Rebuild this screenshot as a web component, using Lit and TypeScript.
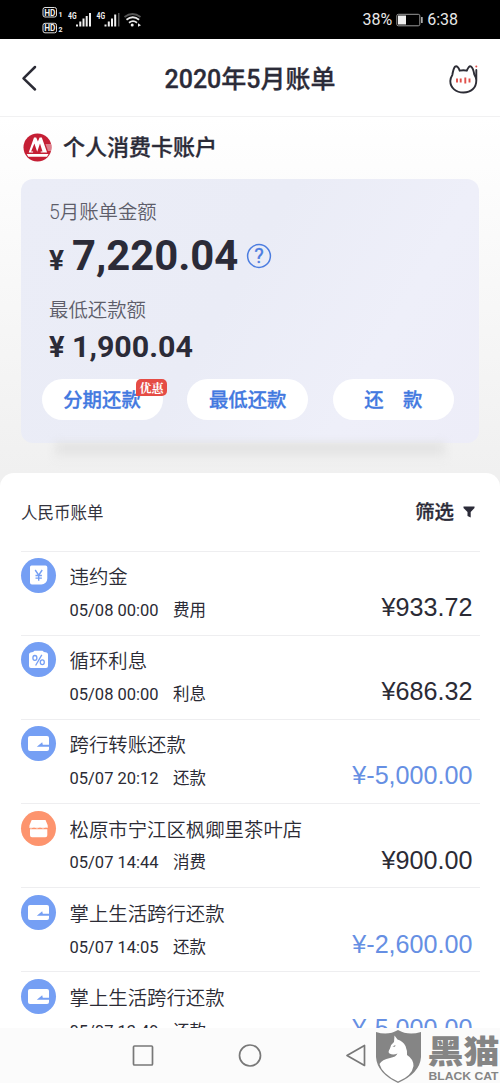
import { LitElement, html, css, svg } from "lit";
import { customElement, property } from "lit/decorators.js";
import { classMap } from "lit/directives/class-map.js";

type Kind = "fee" | "interest" | "card" | "shop";

interface Entry {
  kind: Kind;
  title: string;
  time: string;
  type: string;
  amount: string;
  credit?: boolean;
}

const ENTRIES: Entry[] = [
  { kind: "fee", title: "违约金", time: "05/08 00:00", type: "费用", amount: "¥933.72" },
  { kind: "interest", title: "循环利息", time: "05/08 00:00", type: "利息", amount: "¥686.32" },
  { kind: "card", title: "跨行转账还款", time: "05/07 20:12", type: "还款", amount: "¥-5,000.00", credit: true },
  { kind: "shop", title: "松原市宁江区枫卿里茶叶店", time: "05/07 14:44", type: "消费", amount: "¥900.00" },
  { kind: "card", title: "掌上生活跨行还款", time: "05/07 14:05", type: "还款", amount: "¥-2,600.00", credit: true },
  { kind: "card", title: "掌上生活跨行还款", time: "05/07 13:49", type: "还款", amount: "¥-5,000.00", credit: true },
];

const GLYPHS = {
  fee: svg`
    <path d="M10.500 7.500h14a1.800 1.800 0 0 1 1.800 1.800v11.200a6 6 0 0 1-6 6h-9.300a2 2 0 0 1-2-2V9a1.500 1.500 0 0 1 1.500-1.500z" fill="#fff"/>
    <path d="M14.200 12l3.500 5.200 3.500-5.200M17.700 17.200v5.600M14.500 17.500h6.400M14.500 20.100h6.400" fill="none" stroke="#759ff4" stroke-width="1.400"/>`,
  interest: svg`
    <path d="M8 12.500a2 2 0 0 1 1.500-1.900l2.500-.6 1.500-1.300h8l1.500 1.300 2.500.6a2 2 0 0 1 1.500 1.900V24a2 2 0 0 1-2 2H10a2 2 0 0 1-2-2z" fill="#fff"/>
    <g fill="none" stroke="#759ff4" stroke-width="1.300">
      <ellipse cx="13.900" cy="15.900" rx="2" ry="2.400"/><ellipse cx="21.300" cy="20.300" rx="2" ry="2.400"/>
      <path d="M20.800 12.800l-6.200 10.700"/>
    </g>`,
  card: svg`
    <path d="M9 10h17a2 2 0 0 1 2 2v11a2 2 0 0 1-2 2H9a2 2 0 0 1-2-2V12a2 2 0 0 1 2-2z" fill="#fff"/>
    <path d="M15.800 20.700l5.400-4.400.6 2.400h6.700v2z" fill="#759ff4"/>`,
  shop: svg`
    <path d="M10.700 9h13.800l2.200 5.300v2.200H8.500v-2.200zM9 18.300h17.300v5.900a2 2 0 0 1-2 2H11a2 2 0 0 1-2-2z" fill="#fff"/>
    <path d="M8.500 16.300q1.500 1.600 3 0t3 0 3 0 3 0 3 0 3 0" fill="none" stroke="#fff" stroke-width="1"/>`,
};

@customElement("bill-row")
class BillRow extends LitElement {
  @property({ attribute: false }) entry!: Entry;

  static styles = css`
    :host {
      display: grid;
      grid-template-columns: 48.500px 1fr auto;
      height: 84.200px;
      box-sizing: border-box;
      border-top: 1px solid #eeeef0;
      color: #2b2b35;
    }
    .icon { width: 35px; height: 35px; margin-top: 6.500px; border-radius: 50%; background: #759ff4; }
    .icon.shop { background: #fd946e; }
    .icon svg { display: block; width: 35px; height: 35px; }
    .title { margin-top: 10.600px; font-size: 19.400px; line-height: 32px; font-weight: 350; white-space: nowrap; }
    .meta { display: flex; gap: 14.500px; margin-top: 2.800px; font-size: 16.500px; line-height: 28px; }
    .amount {
      justify-self: end;
      margin: 38.600px 7.500px 0 0;
      font: 25.150px/34px "Liberation Sans", Arial, sans-serif;
      white-space: nowrap;
    }
    .amount.credit { color: #668fe3; }
  `;

  render() {
    const e = this.entry;
    return html`
      <div class=${classMap({ icon: true, shop: e.kind === "shop" })}>
        <svg viewBox="0 0 35 35">${GLYPHS[e.kind]}</svg>
      </div>
      <div>
        <div class="title">${e.title}</div>
        <div class="meta"><span>${e.time}</span><span>${e.type}</span></div>
      </div>
      <div class=${classMap({ amount: true, credit: !!e.credit })}>${e.amount}</div>
    `;
  }
}

@customElement("status-bar")
class StatusBar extends LitElement {
  static styles = css`
    :host {
      display: flex;
      align-items: center;
      box-sizing: border-box;
      height: 39px;
      padding: 0 42px;
      background: #000;
      color: #e8e8e8;
      font-family: Roboto, sans-serif;
    }
    .signals { width: 104px; height: 39px; }
    .right { display: flex; align-items: center; margin-left: auto; font-size: 16px; line-height: 20px; padding-top: 1px; }
    .battery { width: 27px; height: 14px; margin: 0 4px 0 4px; }
    .tag { font: 700 9px Roboto, sans-serif; }
    .tiny { font: 700 7px Roboto, sans-serif; }
    .net { font: 700 8.500px Roboto, sans-serif; }
  `;

  render() {
    return html`
      <svg class="signals" viewBox="42 0 104 39">
        <g fill="none" stroke="#dcdcdc" stroke-width="1">
          <rect x="43" y="7.500" width="13.500" height="9.500" rx="2"/>
          <rect x="43" y="23.300" width="13.500" height="9.500" rx="2"/>
        </g>
        <g fill="#f0f0f0">
          <text class="tag" x="44.200" y="15.500" textLength="11.200" lengthAdjust="spacingAndGlyphs">HD</text>
          <text class="tag" x="44.200" y="31.300" textLength="11.200" lengthAdjust="spacingAndGlyphs">HD</text>
          <text class="tiny" x="58.500" y="16.500">1</text>
          <text class="tiny" x="58.500" y="32.300">2</text>
          <text class="net" x="68" y="18.500" textLength="8.500" lengthAdjust="spacingAndGlyphs">4G</text>
          <text class="net" x="96.500" y="18.500" textLength="8.500" lengthAdjust="spacingAndGlyphs">4G</text>
          <path d="M76 24.500h2v2h-2zM79.300 21.500h2v5h-2zM82.500 18.500h2v8h-2zM85.700 16h2v10.500h-2zM89 13h2v13.500h-2z"/>
          <path d="M104.500 24.500h2v2h-2zM107.800 21.500h2v5h-2zM111 18.500h2v8h-2zM114.200 14.500h2v12h-2z"/>
          <circle cx="132.200" cy="25" r="1.500"/>
          <path d="M138 23.300l3 2-3 1.400z"/>
        </g>
        <path d="M118 13h1.500v13.500H118z" fill="#555"/>
        <g fill="none" stroke-width="1.800">
          <path d="M124.500 17q8-6 16 0" stroke="#555"/>
          <path d="M126.500 19.800q6.300-5 12.600 0" stroke="#e8e8e8"/>
          <path d="M129 22.700q4-3 8 0" stroke="#e8e8e8"/>
        </g>
      </svg>
      <div class="right">
        <span>38%</span>
        <svg class="battery" viewBox="0 0 27 14">
          <rect x=".8" y="1.300" width="23" height="11.500" rx="1.500" fill="none" stroke="#999"/>
          <rect x="2" y="2.500" width="8" height="9" fill="#eee"/>
          <rect x="25" y="4" width="1.700" height="6" fill="#aaa"/>
        </svg>
        <span>6:38</span>
      </div>
    `;
  }
}

@customElement("app-root")
class AppRoot extends LitElement {
  static styles = css`
    :host {
      position: relative;
      display: flex;
      flex-direction: column;
      width: 500px;
      height: 1083px;
      overflow: hidden;
      background: #fff;
      color: #2b2b38;
      font-family: Roboto, "Noto Sans CJK SC", sans-serif;
    }
    status-bar { flex: none; }
    .nav {
      flex: none;
      display: grid;
      grid-template-columns: 60px 1fr 60px;
      align-items: center;
      height: 78px;
      box-sizing: border-box;
      border-bottom: 1px solid #f1f1f2;
    }
    .nav .back { width: 20px; height: 30px; margin-left: 20px; }
    .nav .cat { width: 32px; height: 32px; margin-left: 7px; margin-top: 2px; }
    .nav h1 { margin: 4px 0 0; font-size: 25px; line-height: 36px; font-weight: 500; text-align: center; -webkit-text-stroke: .3px #2b2b38; }
    .summary {
      flex: none;
      height: 356px;
      box-sizing: border-box;
      padding: 12px 21px 0;
      background: linear-gradient(#fff, #f0f0f0);
    }
    .account { display: flex; align-items: center; gap: 11px; height: 34px; padding-left: 2px; font-size: 22px; line-height: 34px; font-weight: 500; -webkit-text-stroke: .3px #2b2b38; }
    .account svg { width: 29px; height: 29px; margin-top: 2px; }
    .account span { margin-top: 3px; }
    .card {
      display: flow-root;
      position: relative;
      height: 264px;
      margin-top: 16px;
      box-sizing: border-box;
      padding: 0 20.500px;
      border-radius: 12px;
      background: linear-gradient(120deg, #ebedf7, #eaecf6 45%, #eeeff9 75%, #ededf8);
    }
    .shade {
      height: 16px;
      margin: 0 34px;
      background: linear-gradient(#dedede, #eeeeee);
      filter: blur(4px);
    }
    .label { margin: 20px 0 0 7.500px; font-size: 19.400px; line-height: 28px; font-weight: 350; color: #5d5d6a; }
    .total { display: flex; align-items: baseline; height: 54px; margin: 2px 0 0 7.500px; font-weight: 700; line-height: 54px; }
    .total .yen { width: 23px; font-size: 28px; }
    .total .value { font-size: 41.800px; }
    .total svg { align-self: center; width: 26px; height: 26px; margin: 0 0 0 8px; }
    .total + .label { margin-top: 14px; }
    .minimum { display: flex; margin: 2px 0 0 7.500px; height: 40px; font-size: 30.400px; line-height: 40px; font-weight: 700; }
    .minimum .yen { width: 23px; font-size: 29px; }
    .actions { display: flex; gap: 24.700px; margin-top: 12px; }
    .action {
      position: relative;
      width: 121px;
      height: 41px;
      border-radius: 21px;
      background: #fff;
      color: #4379e0;
      font-size: 19.400px;
      line-height: 44px;
      font-weight: 500;
      text-align: center;
      white-space: pre;
      -webkit-text-stroke: .3px #4379e0;
    }
    .badge {
      position: absolute;
      top: 0;
      right: -4.500px;
      width: 31px;
      height: 17px;
      border-radius: 5px 5px 5px 0;
      background: #e54c45;
      color: #fff;
      font: 700 12px/17px "Noto Serif CJK SC", "Noto Sans CJK SC", serif;
      -webkit-text-stroke: 0;
    }
    .lower { flex: 1; min-height: 0; display: flex; flex-direction: column; background: #f0f0f0; }
    .sheet {
      flex: 1;
      min-height: 0;
      overflow: hidden;
      padding: 0 20px 0 21px;
      border-radius: 14px 14px 0 0;
      background: #fff;
    }
    .filter { display: flex; align-items: center; justify-content: space-between; height: 77.500px; font-size: 16.500px; color: #33333d; }
    .filter .pick { display: flex; align-items: center; gap: 9px; margin: -3px 5px 0 0; font-size: 19.400px; font-weight: 500; color: #2b2b38; -webkit-text-stroke: .3px #2b2b38; }
    .filter .pick svg { width: 12px; height: 12px; margin-top: 3px; }
    .keys { flex: none; height: 55px; background: #fbfbfb; }
    .keys svg { display: block; width: 500px; height: 55px; }
    .mark { position: absolute; left: 374px; top: 1028px; width: 126px; height: 55px; }
    .mark .name { font: 900 32px "Noto Sans CJK SC", sans-serif; }
    .mark .latin { font: 700 10.500px "Liberation Sans", sans-serif; }
    .q { font: 400 20px Roboto, sans-serif; }
  `;

  render() {
    return html`
      <status-bar></status-bar>
      <div class="nav">
        <svg class="back" viewBox="0 0 20 30"><path d="M15 4L3.500 15.300 15 26.500" fill="none" stroke="#2b2b35" stroke-width="2.500" stroke-linecap="round" stroke-linejoin="round"/></svg>
        <h1>2020年5月账单</h1>
        <svg class="cat" viewBox="0 0 32 32">
          <path d="M29.300 7V17.500C29.300 25 24 29.500 16.500 29.500S3.300 25 3.300 18C3.300 15.500 4.200 13.800 5.300 12C5.800 9 6.500 5.200 8.200 3.500C10 2.500 11.700 5 12.700 7.700Q16.500 6.800 19.800 7.700C21 4.500 22.500 2.500 24 3.500C26 5 26.700 8 27.300 11.500Q29 14 29.300 17.500" fill="none" stroke="#2d2d36" stroke-width="1.900" stroke-linecap="round" stroke-linejoin="round"/>
          <path d="M10 15.500v4M13.700 15.500v4M18.300 14.500v6M22.500 15.500v4" stroke="#e0504a" stroke-width="1.900"/>
          <circle cx="29.300" cy="3.500" r="1" fill="#e0504a"/>
        </svg>
      </div>
      <div class="summary">
        <div class="account">
          <svg viewBox="0 0 29 29">
            <circle cx="14.500" cy="14.500" r="14" fill="#c51f35"/>
            <path d="M5.700 19.500L11 4.500h2.200l1.700 4 1.700-4h2.200l5.300 15h-6.400v-1h1.800L17 10.500l-2.800 8.200-2.800-8.200-3.300 8h2v1z" fill="#fff"/>
            <path d="M3.700 21h21.800l-1.500 2.800H5.300z" fill="#fff"/>
            <path d="M22.500 11h5.500v7h-3z" fill="#e8a6b0" opacity=".7"/>
          </svg>
          <span>个人消费卡账户</span>
        </div>
        <div class="card">
          <div class="label">5月账单金额</div>
          <div class="total">
            <span class="yen">¥</span><span class="value">7,220.04</span>
            <svg viewBox="0 0 26 26">
              <circle cx="13" cy="13" r="11.400" fill="none" stroke="#4c7de0" stroke-width="1.500"/>
              <text class="q" x="13" y="20" text-anchor="middle" fill="#4c7de0" stroke="#4c7de0" stroke-width=".3">?</text>
            </svg>
          </div>
          <div class="label">最低还款额</div>
          <div class="minimum"><span class="yen">¥</span><span>1,900.04</span></div>
          <div class="actions">
            <div class="action">分期还款<span class="badge">优惠</span></div>
            <div class="action">最低还款</div>
            <div class="action">还　款</div>
          </div>
        </div>
        <div class="shade"></div>
      </div>
      <div class="lower">
        <div class="sheet">
          <div class="filter">
            <span>人民币账单</span>
            <span class="pick">筛选
              <svg viewBox="0 0 12 12"><path d="M.5 .5h11v1.500L7.700 6v5.500L4.500 10V6L.5 2z" fill="#2b2b38"/></svg>
            </span>
          </div>
          ${ENTRIES.map((e) => html`<bill-row .entry=${e}></bill-row>`)}
        </div>
      </div>
      <div class="keys">
        <svg viewBox="0 0 500 55" fill="none" stroke="#787878" stroke-width="1.700">
          <rect x="133.500" y="18" width="19" height="19" rx="1"/>
          <circle cx="250" cy="27.500" r="10.500"/>
          <path d="M364.500 17.500v20L347 27.500z" stroke-linejoin="round"/>
        </svg>
      </div>
      <svg class="mark" viewBox="374 1028 126 55" fill="#858585">
        <path d="M376 1032Q388 1036 398 1030Q408 1036 421 1032V1057Q420 1073 398 1083Q377 1073 376 1057z"/>
        <path d="M394.500 1035.500L397.500 1039.500Q403 1041 405.500 1046Q407.500 1051 407 1055Q413.500 1059 413.500 1066Q412 1076 398 1081.500Q382 1074 379.500 1064Q382 1059.500 390 1058Q396 1057 397.500 1053.500Q393 1055.500 389.500 1053.500Q387.500 1052 390 1048.500Q391 1044 394 1042z" fill="#fff"/>
        <path d="M392.500 1046.500l3-1.500-.5 1.800z"/>
        <text class="name" x="427.500" y="1062.500" textLength="72" lengthAdjust="spacingAndGlyphs">黑猫</text>
        <text class="latin" x="428.500" y="1079.500" textLength="70" lengthAdjust="spacingAndGlyphs">BLACK CAT</text>
      </svg>
    `;
  }
}
